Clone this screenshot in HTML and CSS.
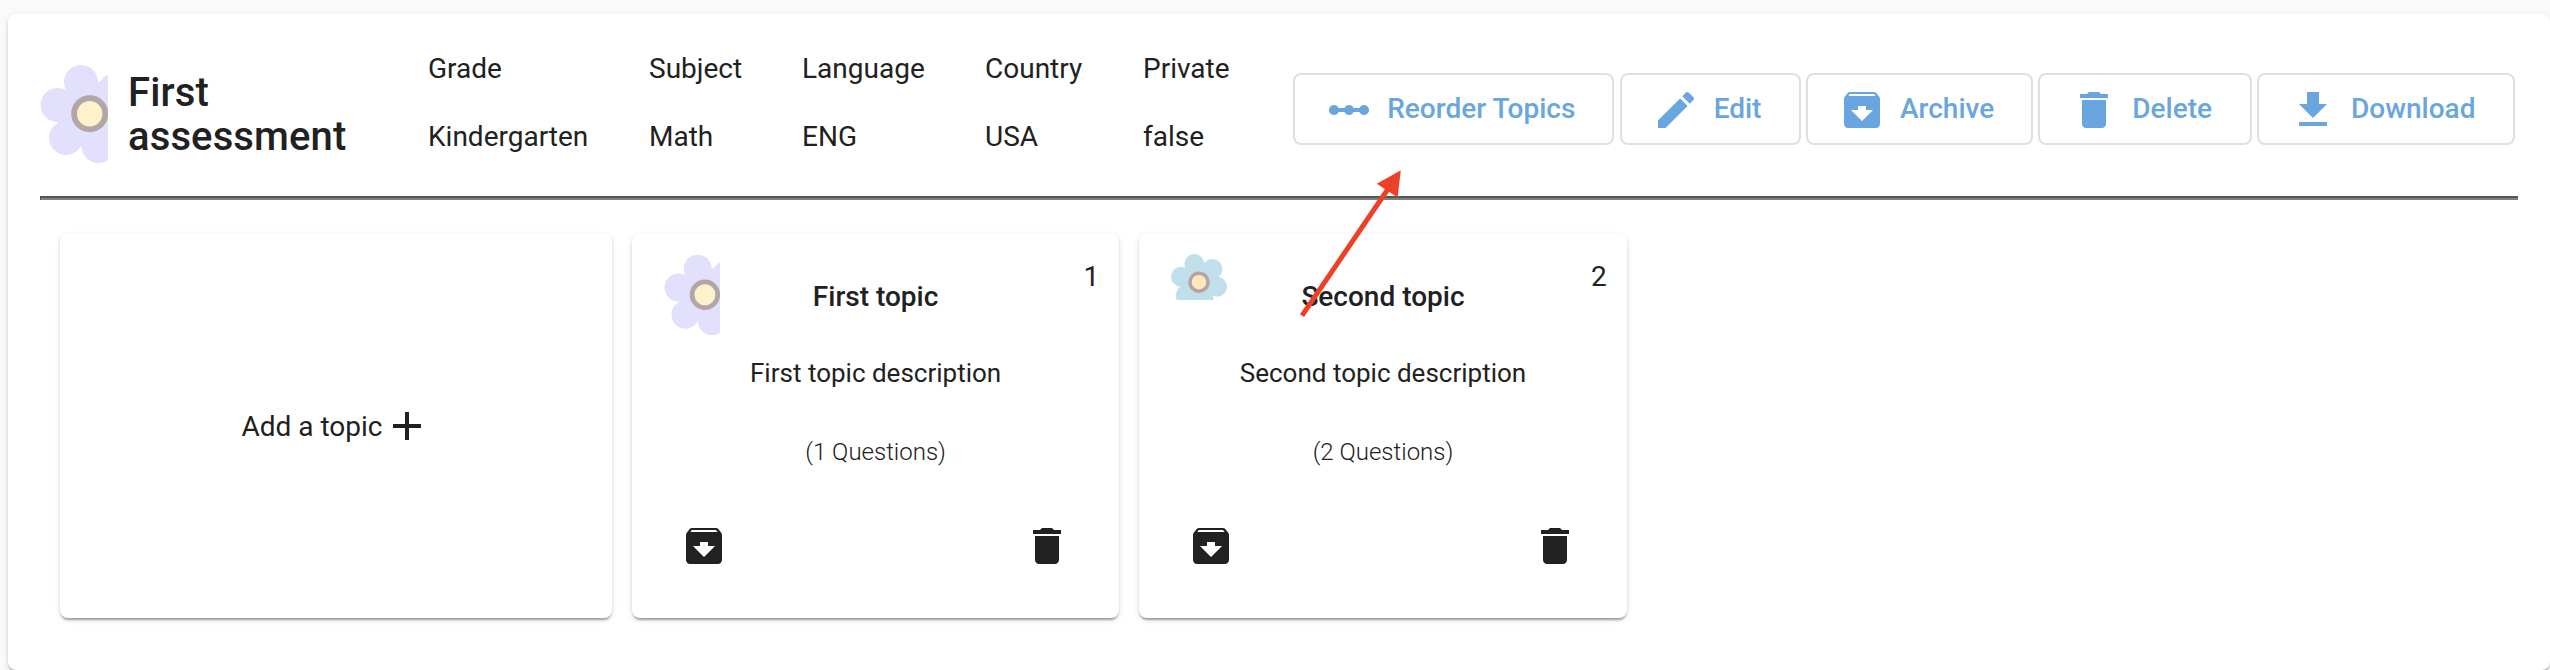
FILE: index.html
```html
<!DOCTYPE html>
<html lang="en">
<head>
<meta charset="utf-8">
<title>First assessment</title>
<link rel="stylesheet" href="styles.css">
</head>
<body>
<svg class="defs" width="0" height="0" aria-hidden="true">
  <symbol id="reorder" viewBox="0 0 24 24"><path d="M19.5 9.5c-1.03 0-1.9.62-2.29 1.5h-2.92C13.9 10.12 13.03 9.5 12 9.5s-1.9.62-2.29 1.5H6.79c-.39-.88-1.26-1.5-2.29-1.5C3.12 9.5 2 10.62 2 12s1.12 2.5 2.5 2.5c1.03 0 1.9-.62 2.29-1.5h2.92c.39.88 1.26 1.5 2.29 1.5s1.9-.62 2.29-1.5h2.92c.39.88 1.26 1.5 2.29 1.5 1.38 0 2.5-1.12 2.5-2.5s-1.12-2.5-2.5-2.5z"/></symbol>
  <symbol id="edit" viewBox="0 0 24 24"><path d="M3 17.25V21h3.75L17.81 9.94l-3.75-3.75L3 17.25zM20.71 7.04c.39-.39.39-1.02 0-1.41l-2.34-2.34c-.39-.39-1.02-.39-1.41 0l-1.83 1.83 3.75 3.75 1.83-1.83z"/></symbol>
  <symbol id="archive" viewBox="0 0 24 24"><path d="M20.54 5.23l-1.39-1.68C18.88 3.21 18.47 3 18 3H6c-.47 0-.88.21-1.16.55L3.46 5.23C3.17 5.57 3 6.02 3 6.5V19c0 1.1.9 2 2 2h14c1.1 0 2-.9 2-2V6.5c0-.48-.17-.93-.46-1.27zM12 17.5L6.5 12H10v-2h4v2h3.5L12 17.5zM5.12 5l.81-1h12l.94 1H5.12z"/></symbol>
  <symbol id="delete" viewBox="0 0 24 24"><path d="M6 19c0 1.1.9 2 2 2h8c1.1 0 2-.9 2-2V7H6v12zM19 4h-3.5l-1-1h-5l-1 1H5v2h14V4z"/></symbol>
  <symbol id="download" viewBox="0 0 24 24"><path d="M19 9h-4V3H9v6H5l7 7 7-7zM5 18v2h14v-2H5z"/></symbol>
  <symbol id="add" viewBox="0 0 24 24"><path d="M19 13h-6v6h-2v-6H5v-2h6V5h2v6h6v2z"/></symbol>
  <symbol id="flower-lilac" viewBox="0 0 68 98">
    <g fill="#e2e0fc"><circle cx="49.7" cy="48.7" r="33.6"/><circle cx="41" cy="17" r="17"/><circle cx="17.6" cy="40" r="17"/><circle cx="26" cy="73" r="17"/><circle cx="58.4" cy="81" r="17"/><circle cx="75" cy="25" r="17"/><circle cx="82" cy="57" r="17"/></g>
    <circle cx="49.7" cy="48.7" r="15.6" fill="#fef2cd" stroke="#b3a7a5" stroke-width="5.8"/>
  </symbol>
  <symbol id="flower-blue" viewBox="0 0 56 46">
    <g fill="#c0dfea"><circle cx="28" cy="28.2" r="20"/><circle cx="23.3" cy="10" r="10"/><circle cx="41.4" cy="15" r="10"/><circle cx="46" cy="32.8" r="10"/><circle cx="32.8" cy="46.4" r="10"/><circle cx="14.8" cy="41.4" r="10"/><circle cx="10" cy="22.8" r="10"/></g>
    <circle cx="28" cy="28.2" r="9" fill="#fce8ba" stroke="#b3a5a3" stroke-width="3.4"/>
  </symbol>
</svg>

<main class="panel">
  <header class="header">
    <svg class="logo"><use href="#flower-lilac"/></svg>
    <h1 class="title">First assessment</h1>
    <div class="meta">
      <span>Grade</span><span>Subject</span><span>Language</span><span>Country</span><span>Private</span>
      <span>Kindergarten</span><span>Math</span><span>ENG</span><span>USA</span><span>false</span>
    </div>
    <div class="actions">
      <button class="btn btn-reorder"><svg class="icon"><use href="#reorder"/></svg><span class="label">Reorder Topics</span></button>
      <button class="btn btn-edit"><svg class="icon"><use href="#edit"/></svg><span class="label">Edit</span></button>
      <button class="btn btn-archive"><svg class="icon"><use href="#archive"/></svg><span class="label">Archive</span></button>
      <button class="btn btn-delete"><svg class="icon"><use href="#delete"/></svg><span class="label">Delete</span></button>
      <button class="btn btn-download"><svg class="icon"><use href="#download"/></svg><span class="label">Download</span></button>
    </div>
  </header>
  <div class="rule"></div>
  <section class="topics">
    <article class="card card-add"><span>Add a topic</span><svg class="icon"><use href="#add"/></svg></article>
    <article class="card topic">
      <svg class="flower flower-tall"><use href="#flower-lilac"/></svg>
      <span class="number">1</span>
      <h2 class="topic-title">First topic</h2>
      <p class="description">First topic description</p>
      <p class="count">(1 Questions)</p>
      <div class="tools"><svg class="icon"><use href="#archive"/></svg><svg class="icon"><use href="#delete"/></svg></div>
    </article>
    <article class="card topic">
      <svg class="flower flower-short"><use href="#flower-blue"/></svg>
      <span class="number">2</span>
      <h2 class="topic-title">Second topic</h2>
      <p class="description">Second topic description</p>
      <p class="count">(2 Questions)</p>
      <div class="tools"><svg class="icon"><use href="#archive"/></svg><svg class="icon"><use href="#delete"/></svg></div>
    </article>
  </section>
</main>
<svg class="arrow" viewBox="0 0 110 155"><path d="M6 147.6L92 21" stroke="#ec4127" stroke-width="5" fill="none"/><path d="M104.8 2.2L80.8 15.7L101.6 29.5z" fill="#ec4127"/></svg>
</body>
</html>
```

FILE: styles.css
```css
* { box-sizing: border-box; }

body {
  margin: 0;
  height: 670px;
  padding: 14px 0 0 8px;
  overflow: hidden;
  background: #fafafa;
  color: #212121;
  font: 400 28px Roboto, "Liberation Sans", sans-serif;
}

.defs { position: absolute; }

.panel,
.card {
  background: #fff;
  border-radius: 8px;
  box-shadow: 0 4px 2px -2px rgba(0, 0, 0, .2), 0 2px 2px 0 rgba(0, 0, 0, .14), 0 2px 6px 0 rgba(0, 0, 0, .12);
}

.panel { height: 656px; padding: 20px 32px 0; }

.header { display: flex; align-items: flex-start; height: 162px; }

.logo { flex: none; width: 68px; height: 98px; margin-top: 31px; }

.title {
  flex: none;
  width: 240px;
  margin: 37px 0 0 20px;
  font-size: 40px;
  line-height: 44px;
  font-weight: 500;
  letter-spacing: .12px;
}

.meta {
  display: grid;
  grid-template-columns: 221px 153px 183px 158px auto;
  margin: 1px 0 0 60px;
  line-height: 68px;
  white-space: nowrap;
}

.actions { display: flex; gap: 5.4px; margin: 39px 3px 0 auto; }

.btn {
  display: flex;
  align-items: center;
  gap: 14px;
  height: 72px;
  padding: 2px 0 0 30px;
  border: 2px solid #e0e0e0;
  border-radius: 8px;
  background: transparent;
  color: #69a5de;
  font: 500 28px/40px Roboto, "Liberation Sans", sans-serif;
  white-space: nowrap;
}

.label { padding-bottom: 3px; }

.btn-reorder { width: 321px; }
.btn-edit { width: 181px; }
.btn-archive { width: 226.8px; }
.btn-delete { width: 213.4px; }
.btn-download { width: 258px; }

.icon { flex: none; width: 48px; height: 48px; fill: currentColor; }

.rule { height: 4px; background: #808080; border-top: 2px solid #555; border-left: 1px solid #555; }

.topics {
  display: grid;
  grid-template-columns: 552px 487.2px 487.6px;
  gap: 20px;
  padding: 34px 20px 0;
}

.card { height: 384px; }

.card-add { display: flex; align-items: center; justify-content: center; }

.topic {
  position: relative;
  padding: 45px 48px 0;
  text-align: center;
}

.flower { position: absolute; top: 20px; left: 32px; width: 56px; }
.flower-tall { height: 82px; }
.flower-short { height: 46px; }

.number { position: absolute; top: 26px; right: 20px; line-height: 33px; }

.topic-title { margin: 0; font-size: 28px; font-weight: 500; line-height: 36px; }
.description { margin: 42px 0 0; font-size: 26px; line-height: 32px; }
.count { margin: 49px 0 0; font-size: 24px; line-height: 28px; font-weight: 300; }

.tools { display: flex; justify-content: space-between; margin-top: 56px; }

.arrow { position: absolute; top: 168px; left: 1296px; width: 110px; height: 155px; }
```
